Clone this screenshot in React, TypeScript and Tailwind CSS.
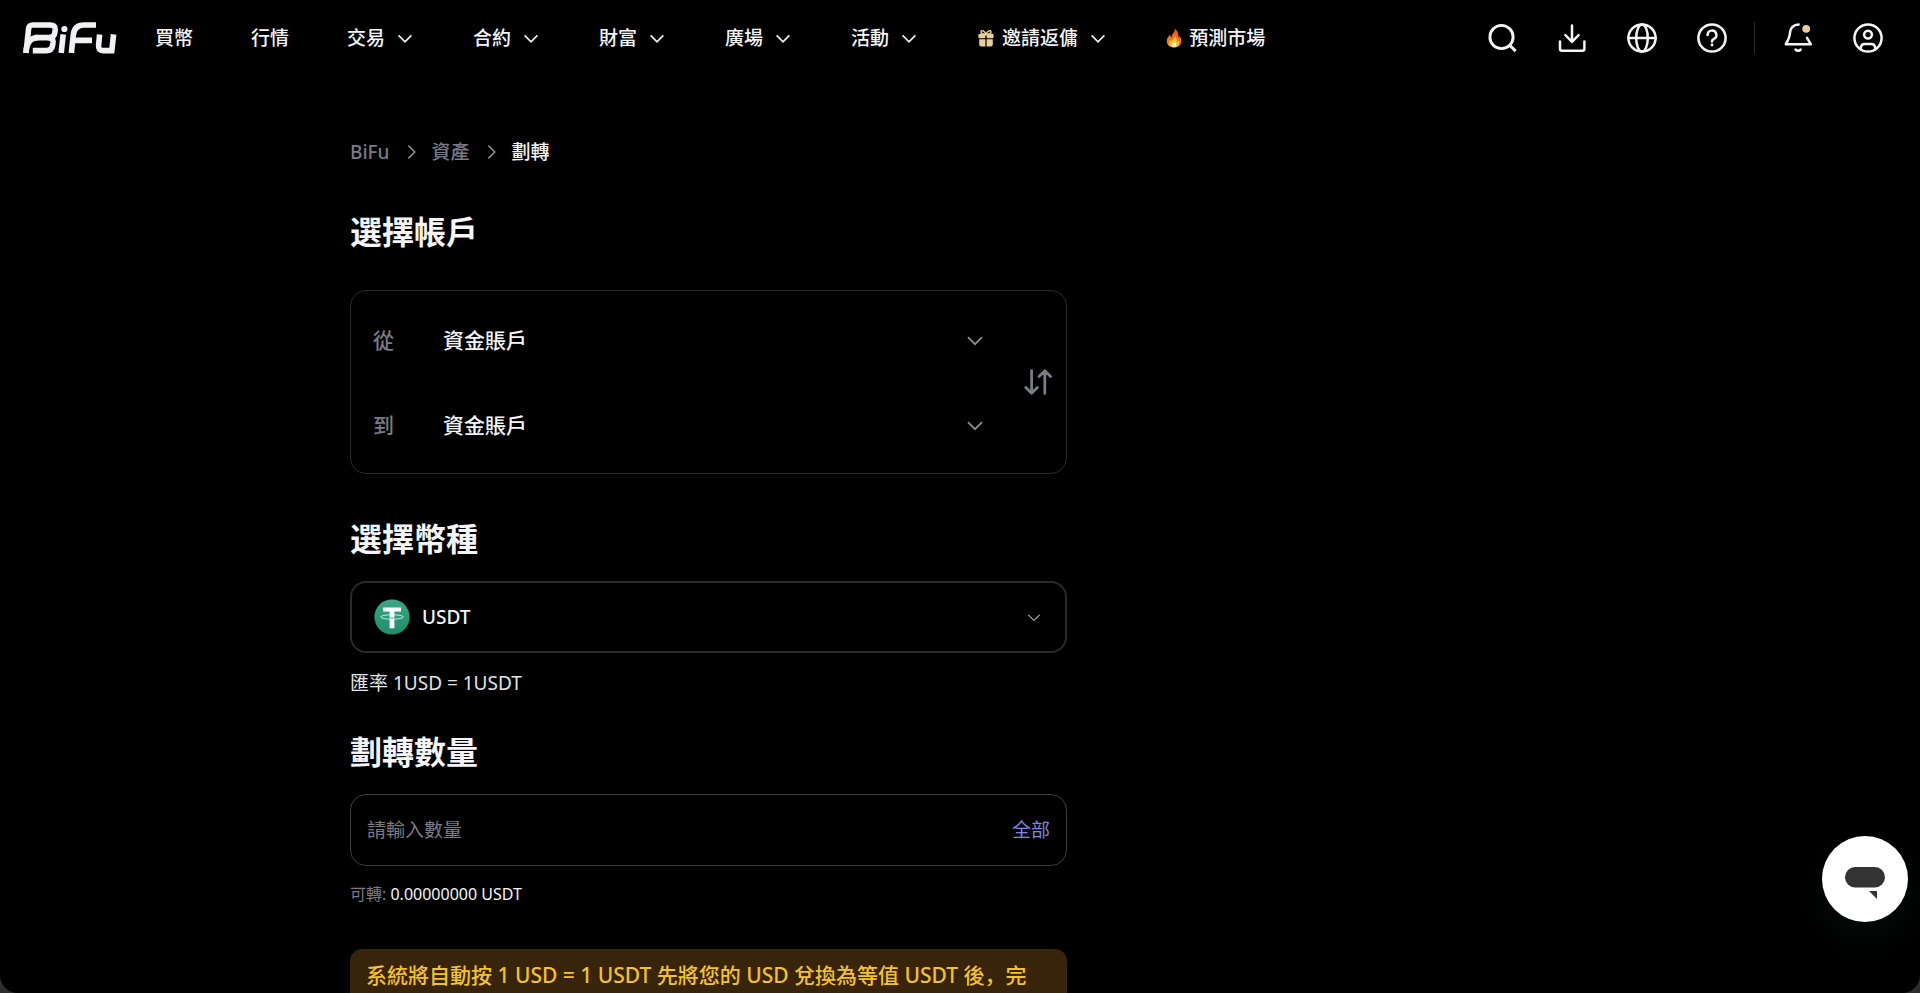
import { useState, type ReactNode } from "react";

type NavItem = {
  label: string;
  menu?: boolean;
  icon?: ReactNode;
};

const NAV: NavItem[] = [
  { label: "買幣" },
  { label: "行情" },
  { label: "交易", menu: true },
  { label: "合約", menu: true },
  { label: "財富", menu: true },
  { label: "廣場", menu: true },
  { label: "活動", menu: true },
  { label: "邀請返傭", menu: true, icon: <GiftIcon /> },
  { label: "預測市場", icon: <FlameIcon /> },
];

const ACCOUNTS = ["資金賬戶", "合約賬戶", "理財賬戶"];
const COINS = ["USDT", "USD"];

function Logo() {
  return (
    <svg viewBox="0 0 94 32" className="h-8 w-[94px]" fill="none" stroke="#f1f1f4" strokeWidth="5.6" role="img" aria-label="BiFu">
      <path d="M3 31 L5.6 6.8 Q6 3 10 3 H27 Q32.6 3 32.2 7.6 L31.8 11 Q31.2 15.6 26 15.6 H11.5 M24 15.6 Q30.6 15.6 30 20.6 L29.6 23.2 Q28.8 28.6 23.4 28.6 H13 L9.8 28.6" />
      <path d="M3 31 Q3.4 15.6 15 15.6" />
      <path d="M38.2 31 L40.2 12.4" />
      <circle cx="41.4" cy="7" r="3.1" fill="#f1f1f4" stroke="none" />
      <path d="M48.4 31 L50.2 13.6 Q51.2 3 61 3 H73 M50 18.4 H69" />
      <path d="M76.6 12.4 L75.6 23.2 Q75.2 28.6 80 28.6 H88.8 L90.6 12.4" />
    </svg>
  );
}

function Chevron({ className }: { className?: string }) {
  return (
    <svg viewBox="0 0 20 20" className={className} fill="none" stroke="currentColor" strokeWidth="1.6" aria-hidden="true">
      <path d="M3.6 7.4 10 13.8l6.4-6.4" />
    </svg>
  );
}

function GiftIcon() {
  return (
    <svg viewBox="0 0 16 18" className="h-[18px] w-[18px]" aria-hidden="true">
      <g fill="none" stroke="#e6cf9c" strokeWidth="1.5">
        <path d="M8 5.4C6.8 2 3.4.4 3 2.8 2.8 4.4 5 5.2 8 5.4Z" />
        <path d="M8 5.4C9.2 2 12.6.4 13 2.8 13.2 4.4 11 5.2 8 5.4Z" />
      </g>
      <g fill="#e6cf9c">
        <rect x=".4" y="4.8" width="7" height="4.4" rx="1.2" />
        <rect x="8.6" y="4.8" width="7" height="4.4" rx="1.2" />
        <path d="M1.2 10.2h6.2v7.4H3.2a2 2 0 0 1-2-2zM8.6 10.2h6.2v5.4a2 2 0 0 1-2 2H8.6z" />
      </g>
    </svg>
  );
}

function FlameIcon() {
  return (
    <svg viewBox="0 0 16 20" className="h-5 w-4" aria-hidden="true">
      <defs>
        <linearGradient id="flame" x1="0" y1="0" x2="0" y2="1">
          <stop offset="0" stopColor="#f0511f" />
          <stop offset="1" stopColor="#fa8a1c" />
        </linearGradient>
      </defs>
      <path
        fill="url(#flame)"
        d="M8.6.6c.8 2-.6 3.6-1.8 5.2C5.8 7 5.4 8 5.6 9.6 4.6 9 4.2 8 4.4 6.6 2 8.6.6 11 .8 13.4 1 17.2 4 19.4 8 19.4s7-2.2 7.2-6c.1-2-.4-4-1.8-5.8.1 1-.2 1.8-.9 2.3C12.8 6.2 11.6 2.6 8.6.6Z"
      />
      <path fill="#fbc02d" d="M8.8 8c.4 2-2.8 3.4-3.4 5.4-.6-.4-.9-1-.9-1.6-1 1.2-1.5 2.4-1.3 3.6.3 2.4 2.4 3.8 4.8 3.8s4.6-1.4 4.8-3.8c.1-1.2-.3-2.3-1-3.2-.1.8-.4 1.3-1 1.6C11 11.6 10.4 9.4 8.8 8Z" />
      <path fill="#fff3c0" d="M8.2 13.4c-1.6 1.2-2.4 2.2-2.4 3.4 0 1.4 1 2.2 2.2 2.2s2.2-.8 2.2-2.2c0-1.2-.8-2.4-2-3.4Z" />
    </svg>
  );
}

function ToolIcon({ label, children }: { label: string; children: ReactNode }) {
  return (
    <button type="button" aria-label={label} className="size-8 shrink-0 cursor-pointer">
      <svg viewBox="0 0 32 32" className="size-8" fill="none" stroke="#f5f5f5" strokeWidth="2.5" strokeLinecap="round" strokeLinejoin="round">
        {children}
      </svg>
    </button>
  );
}

function Header() {
  return (
    <header className="flex h-[76px] shrink-0 items-center justify-between pl-[23px] pr-9">
      <div className="flex items-center gap-[38px]">
        <a href="#" className="shrink-0">
          <Logo />
        </a>
        <nav className="flex items-center gap-[58px] text-[19px] leading-7 font-medium whitespace-nowrap">
          {NAV.map((item) => (
            <a key={item.label} href="#" className="flex items-center">
              {item.icon && <span className="mr-[7px]">{item.icon}</span>}
              {item.label}
              {item.menu && <Chevron className="ml-[10px] size-5" />}
            </a>
          ))}
        </nav>
      </div>

      <div className="flex items-center gap-[38px]">
        <ToolIcon label="搜尋">
          <circle cx="15.5" cy="15" r="11.6" strokeWidth="2.9" />
          <path d="m24 23.5 5.6 5.6" strokeWidth="2.9" strokeLinecap="butt" />
        </ToolIcon>
        <ToolIcon label="下載">
          <path d="M16 3.6v16M9.4 13.2l6.6 6.6 6.6-6.6M4 19.6v7.2a2 2 0 0 0 2 2h20.4a2 2 0 0 0 2-2v-7.2" />
        </ToolIcon>
        <ToolIcon label="語言">
          <circle cx="16" cy="16" r="13.6" />
          <ellipse cx="16" cy="16" rx="5.8" ry="13.6" />
          <path d="M2.4 16h27.2" />
        </ToolIcon>
        <ToolIcon label="幫助">
          <circle cx="16" cy="16" r="13.6" />
          <path d="M11.6 13a4.4 4.4 0 1 1 6.4 3.9c-1.3.7-2 1.3-2 2.5" />
          <path d="M16 22.9v.1" strokeWidth="2.9" />
        </ToolIcon>
        <div className="-mr-[11px] -ml-3 h-8 w-px bg-[#2c2c2e]" />
        <ToolIcon label="通知">
          <path d="M16.6 2.4c-5.2 0-8.3 3.8-8.6 8.2-.2 4.6-1 6.2-4.2 11.6h25L25 15.8" />
          <path d="M13.6 27.6a3.2 3.2 0 0 0 5 0" />
          <circle cx="24.2" cy="6.8" r="3.9" fill="#e6cf9c" stroke="none" />
        </ToolIcon>
        <ToolIcon label="帳號">
          <circle cx="16" cy="16" r="13.6" />
          <circle cx="16" cy="12.6" r="3.9" />
          <path d="M8.8 26.6c0-3.2 1.2-4.6 4-4.6h6.4c2.8 0 4 1.4 4 4.6" />
        </ToolIcon>
      </div>
    </header>
  );
}

function AccountRow({
  id,
  label,
  value,
  onChange,
}: {
  id: string;
  label: string;
  value: string;
  onChange: (v: string) => void;
}) {
  return (
    <div className="flex h-[85px] items-center text-[21px] font-medium">
      <label htmlFor={id} className="w-[70px] leading-8 text-[#7b7b86]">
        {label}
      </label>
      <div className="relative flex-1">
        <select
          id={id}
          value={value}
          onChange={(e) => onChange(e.target.value)}
          className="block w-full cursor-pointer appearance-none bg-transparent leading-8 outline-none"
        >
          {ACCOUNTS.map((a) => (
            <option key={a}>{a}</option>
          ))}
        </select>
        <Chevron className="pointer-events-none absolute top-1/2 right-0 size-[22px] -translate-y-1/2 text-[#8b8b95]" />
      </div>
    </div>
  );
}

export default function App() {
  const [from, setFrom] = useState(ACCOUNTS[0]);
  const [to, setTo] = useState(ACCOUNTS[0]);
  const [coin, setCoin] = useState(COINS[0]);
  const [amount, setAmount] = useState("");

  const swap = () => {
    setFrom(to);
    setTo(from);
  };

  return (
    <div className="h-screen bg-[#2a2c30]">
      <div className="flex h-full flex-col overflow-hidden rounded-b-[18px] bg-black font-['Noto_Sans','Noto_Sans_CJK_SC',sans-serif] text-[#f5f5f7]">
        <Header />

        <main className="flex-1 overflow-y-auto px-6 pt-[62px] pb-16 [scrollbar-width:none]">
          <div className="mx-auto max-w-[1220px]">
            <div className="max-w-[717px]">
              <nav aria-label="breadcrumb" className="flex items-center gap-[11px] text-[19px] leading-7 font-medium text-[#7b7b86]">
                <a href="#">BiFu</a>
                <Chevron className="size-5 -rotate-90 text-[#8b8b95]" />
                <a href="#">資產</a>
                <Chevron className="size-5 -rotate-90 text-[#8b8b95]" />
                <span className="text-[#f5f5f7]">劃轉</span>
              </nav>

              <h2 className="mt-11 text-[32px] leading-[44px] font-bold">選擇帳戶</h2>
              <section className="mt-9 flex items-center rounded-2xl border border-[#2a2a2d] py-[6px] pr-[14px] pl-[22px]">
                <div className="flex-1">
                  <AccountRow id="from" label="從" value={from} onChange={setFrom} />
                  <AccountRow id="to" label="到" value={to} onChange={setTo} />
                </div>
                <button type="button" onClick={swap} aria-label="交換" className="ml-[38px] cursor-pointer text-[#7b7b86]">
                  <svg viewBox="0 0 28 28" className="size-7" fill="none" stroke="currentColor" strokeWidth="2.8" strokeLinecap="round" strokeLinejoin="round">
                    <path d="M7.6 2.6v22.4M1.8 19.4l5.8 5.8 5.8-5.8M20.8 25.4V3M15 8.6l5.8-5.8 5.8 5.8" />
                  </svg>
                </button>
              </section>

              <h2 className="mt-[43px] text-[32px] leading-[44px] font-bold">
                <label htmlFor="coin">選擇幣種</label>
              </h2>
              <div className="relative mt-5 flex h-[72px] items-center rounded-2xl border-2 border-[#2a2a2d]">
                <svg viewBox="0 0 36 36" className="pointer-events-none absolute left-[22px] size-9" aria-hidden="true">
                  <defs>
                    <linearGradient id="usdt" x1="0" y1="0" x2="0" y2="1">
                      <stop offset="0" stopColor="#3aa886" />
                      <stop offset="1" stopColor="#1f8c68" />
                    </linearGradient>
                  </defs>
                  <circle cx="18" cy="18" r="17.6" fill="url(#usdt)" />
                  <ellipse cx="18" cy="18" rx="11.4" ry="2.2" fill="none" stroke="#c4ecdc" strokeWidth="1" />
                  <path fill="#fff" d="M9.2 8.4h17.8v4.2h-6.6v16.6h-4.8V12.6H9.2z" />
                  <path fill="none" stroke="#2d9a78" strokeWidth=".8" d="M15.6 19h4.8" />
                </svg>
                <select
                  id="coin"
                  value={coin}
                  onChange={(e) => setCoin(e.target.value)}
                  className="h-full w-full cursor-pointer appearance-none rounded-2xl bg-transparent pl-[70px] text-[19px] font-medium outline-none"
                >
                  {COINS.map((c) => (
                    <option key={c}>{c}</option>
                  ))}
                </select>
                <Chevron className="pointer-events-none absolute right-[22px] size-[18px] text-[#8b8b95]" />
              </div>
              <p className="mt-4 text-[19px] leading-7 text-[#e4e4e7]">匯率 1USD = 1USDT</p>

              <h2 className="mt-[33px] text-[32px] leading-[44px] font-bold">
                <label htmlFor="amount">劃轉數量</label>
              </h2>
              <div className="mt-5 flex h-[72px] items-center rounded-2xl border border-[#3e3e42] px-4 text-[19px]">
                <input
                  id="amount"
                  inputMode="decimal"
                  value={amount}
                  onChange={(e) => setAmount(e.target.value)}
                  placeholder="請輸入數量"
                  className="min-w-0 flex-1 bg-transparent outline-none placeholder:text-[#7b7b86]"
                />
                <button type="button" onClick={() => setAmount("0.00000000")} className="cursor-pointer text-[#8585dc]">
                  全部
                </button>
              </div>
              <p className="mt-4 text-base leading-6">
                <span className="text-[#7b7b86]">可轉:</span> 0.00000000 USDT
              </p>

              <div className="mt-[43px] rounded-xl bg-[#38240a] py-[10px] pr-7 pl-4 text-[21px] leading-8 font-medium text-[#f4c22b]">
                系統將自動按 1 USD = 1 USDT 先將您的 USD 兌換為等值 USDT 後，完成劃轉。
              </div>
            </div>
          </div>
        </main>
      </div>

      <button
        type="button"
        aria-label="線上客服"
        className="fixed right-3 bottom-[71px] size-[86px] cursor-pointer rounded-full bg-white shadow-[0_16px_32px_rgba(140,180,170,0.06)]"
      >
        <svg viewBox="0 0 86 86" className="size-full" fill="#333" aria-hidden="true">
          <rect x="23" y="31" width="40" height="20.4" rx="10.2" />
          <path d="M47 55h8v8z" />
        </svg>
      </button>
    </div>
  );
}
